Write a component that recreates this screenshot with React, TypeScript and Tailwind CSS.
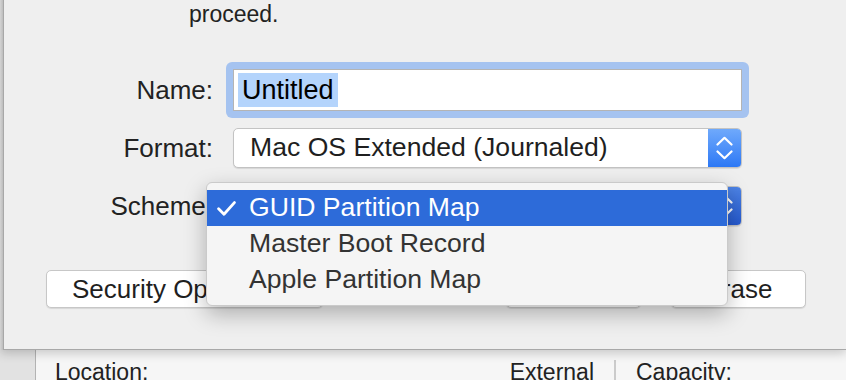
const labelCls = 'w-[209px] shrink-0 text-right text-[26px] leading-[30px] text-[#222]'

function Stepper({ pressed }: { pressed?: boolean }) {
  return (
    <div
      className={`flex w-[33px] shrink-0 items-center justify-center ${
        pressed
          ? 'bg-gradient-to-b from-[#4d83e6] to-[#2559cf]'
          : 'bg-gradient-to-b from-[#6fa9fb] to-[#2c78f5]'
      }`}
    >
      <svg width="17" height="25" viewBox="0 0 17 25" fill="none">
        <path d="M1.5 8.5 L8.5 1.8 L15.5 8.5" stroke="white" strokeWidth="2.2" strokeLinecap="round" strokeLinejoin="round" />
        <path d="M1.5 15.5 L8.5 22.2 L15.5 15.5" stroke="white" strokeWidth="2.2" strokeLinecap="round" strokeLinejoin="round" />
      </svg>
    </div>
  )
}

function PopUp({ value, pressed }: { value: string; pressed?: boolean }) {
  return (
    <div className="ml-[20px] flex h-[40px] w-[509px] overflow-hidden rounded-[5px] border border-[#c3c3c3] bg-white shadow-[0_1px_1px_rgba(0,0,0,0.1)]">
      <div className="flex flex-1 items-center pl-[16px] text-[26.6px] text-[#1f1f1f]">{value}</div>
      <Stepper pressed={pressed} />
    </div>
  )
}

function Button({ label, className }: { label: string; className?: string }) {
  return (
    <div
      className={`flex h-[38px] items-center rounded-[5px] border border-[#c7c7c7] bg-white text-[26px] text-[#1f1f1f] shadow-[0_1px_1px_rgba(0,0,0,0.1)] ${className ?? ''}`}
    >
      {label}
    </div>
  )
}

const schemes = ['GUID Partition Map', 'Master Boot Record', 'Apple Partition Map']

export default function App() {
  return (
    <div className="relative flex h-[380px] w-[846px] flex-col overflow-hidden bg-[#e3e3e3] font-['Liberation_Sans',Arial,sans-serif]">
      {/* sheet */}
      <div className="relative z-10 flex h-[350px] shrink-0 shadow-[0_3px_10px_rgba(0,0,0,0.2)]">
        <div className="w-[3px] bg-gradient-to-r from-[#d4d4d4] to-[#bdbdbd]" />
        <div className="flex flex-1 flex-col border-b border-l border-[#a8a8a8] bg-[#efefef]">
          <p className="pl-[185px] text-[23px] leading-[28px] text-[#222]">proceed.</p>

          <div className="mt-[34px] flex items-center">
            <div className={labelCls}>Name:</div>
            <div className="ml-[13px] h-[56px] w-[523px] rounded-[6px] bg-[#a5c3f0] p-[7px]">
              <div className="flex h-full w-full items-center border border-[#b4b4b4] bg-white pl-[4px]">
                <span className="bg-[#b4d4fc] px-[4px] text-[27px] leading-[34px] text-black">Untitled</span>
              </div>
            </div>
          </div>

          <div className="mt-[10px] flex items-center">
            <div className={labelCls}>Format:</div>
            <PopUp value="Mac OS Extended (Journaled)" />
          </div>

          <div className="mt-[18px] flex items-center">
            <div className={labelCls}>Scheme:</div>
            <PopUp value="GUID Partition Map" pressed />
          </div>

          <div className="mt-[44px] flex items-center pl-[42px] pr-[40px]">
            <Button label="Security Options..." className="w-[277px] pl-[25px]" />
            <div className="ml-auto flex gap-[30px]">
              <Button label="Cancel" className="w-[135px] justify-center" />
              <Button label="Erase" className="w-[135px] justify-center" />
            </div>
          </div>
        </div>
      </div>

      {/* info strip below the sheet */}
      <div className="flex flex-1">
        <div className="w-[36px] shrink-0 border-r border-[#b3b3b3] bg-[#e2e2e2]" />
        <div className="flex flex-1 bg-[#f6f6f6] pl-[19px] pt-[9px] text-[23px] leading-[26px] text-[#222]">
          <span className="flex-1">Location:</span>
          <span>External</span>
          <div className="ml-[20px] mt-px w-[2px] bg-[#cbcbcb]" />
          <span className="ml-[20px] w-[210px]">Capacity:</span>
        </div>
      </div>

      {/* open pop-up menu */}
      <div className="absolute left-[206px] top-[182px] z-20 w-[522px] rounded-[6px] border border-[#cacaca] bg-[#f5f5f5] py-[7px] shadow-[0_8px_22px_rgba(0,0,0,0.28)]">
        {schemes.map((s, i) => (
          <div
            key={s}
            className={`flex h-[36px] items-center text-[26.6px] ${
              i === 0 ? 'bg-[#2d6bd9] text-white' : 'text-[#333]'
            }`}
          >
            <div className="flex w-[42px] shrink-0 items-center pl-[10px]">
              {i === 0 && (
                <svg width="19" height="15" viewBox="0 0 19 15" fill="none">
                  <path d="M1.6 7.8 L7 13.3 L17.4 1.6" stroke="white" strokeWidth="2.8" strokeLinecap="round" strokeLinejoin="round" />
                </svg>
              )}
            </div>
            {s}
          </div>
        ))}
      </div>
    </div>
  )
}
